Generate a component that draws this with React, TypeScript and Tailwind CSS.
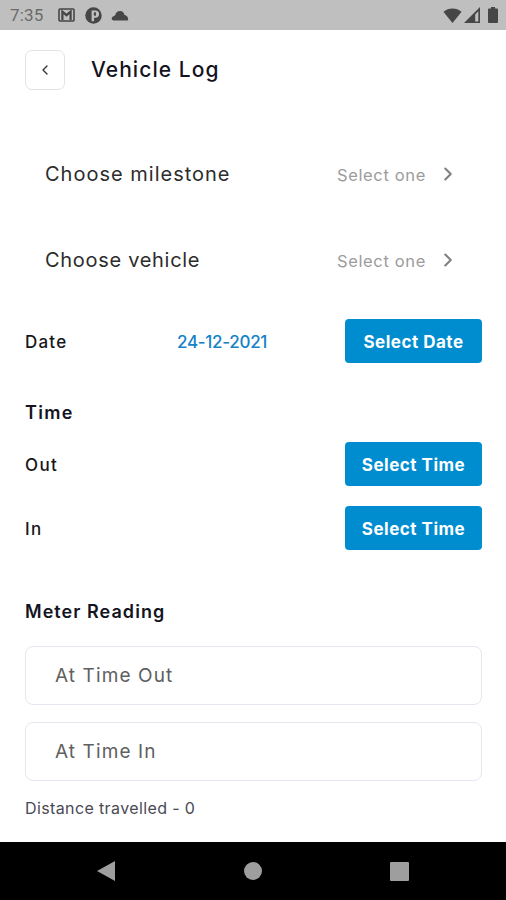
import { ChevronLeft, ChevronRight } from "lucide-react";


const StatusBar = () => {
    return (
        <div className="flex h-[30px] items-center justify-between bg-[#bfbfbf] text-[#464646]">
            <div className="flex items-center pl-[10px]">
                <span className="w-[48px] font-['Roboto',sans-serif] text-[17px] leading-none tracking-[0.2px] text-[#6b6b6b]">7:35</span>
                <svg width="17" height="14" viewBox="0 0 17 14" fill="none">
                    <rect x="1" y="1" width="15" height="12" rx="1" stroke="currentColor" strokeWidth="1.6" />
                    <path d="M4.4 12V3.6L8.5 7.2L12.6 3.6V12" stroke="currentColor" strokeWidth="2.2" />
                </svg>
                <svg className="ml-[10px]" width="17" height="17" viewBox="0 0 18 18">
                    <circle cx="9" cy="9" r="8.7" fill="currentColor" />
                    <path d="M7 15V3.6H11A3.6 3.6 0 0 1 11 11.4H9.6V15Z" fill="#bfbfbf" />
                    <path d="M9.4 5.6H11.6V9.2H9.4Z" fill="currentColor" />
                </svg>
                <svg className="ml-[9px]" width="18" height="11" viewBox="0 0 18 11" fill="currentColor">
                    <path d="M2.4 10.4Q0.6 10.4 0.6 8.6Q0.8 6.4 4 5.4Q5.2 1 9.2 1Q12.6 1.2 13.4 4.8Q17 6 17.2 9.4Q17.2 10.4 16.2 10.4Z" />
                </svg>
            </div>
            <div className="flex items-center pr-[8px]">
                <svg width="19" height="15" viewBox="0 0 19 15" fill="currentColor">
                    <path d="M9.5 15L0.4 3.8C5.4 -0.7 13.6 -0.7 18.6 3.8Z" />
                </svg>
                <svg className="ml-[2px]" width="16" height="16" viewBox="0 0 16 16">
                    <path d="M0 16L16 0V16Z" fill="currentColor" />
                    <path d="M11.2 7.4L14.3 4.2V14.4H11.2Z" fill="#bfbfbf" />
                </svg>
                <svg className="ml-[8px]" width="10" height="16" viewBox="0 0 10 16" fill="currentColor">
                    <path d="M3 0H7V1.6H9Q10 1.6 10 2.6V15Q10 16 9 16H1Q0 16 0 15V2.6Q0 1.6 1 1.6H3Z" />
                </svg>
            </div>
        </div>
    );
};

const ChooseRow = ({ label, tracking }: { label: string; tracking: string }) => {
    return (
        <div className="flex h-[86px] items-center justify-between pl-[20px] pr-[23px]">
            <span className={`text-[20px] text-[#2c2c2c] ${tracking}`}>{label}</span>
            <div className="flex items-center">
                <span className="pt-[2px] text-[16.5px] tracking-[0.65px] text-[#9c9c9c]">Select one</span>
                <ChevronRight className="ml-[11px] text-[#808080]" size={22} strokeWidth={2.3} />
            </div>
        </div>
    );
};

const PickButton = ({ label }: { label: string }) => {
    return (
        <button className="h-[44px] w-[137px] rounded-[4px] bg-[#008dd0] pt-[3px] text-[17px] font-bold tracking-[0.5px] text-white">
            {label}
        </button>
    );
};

const MeterInput = ({ label }: { label: string }) => {
    return (
        <div className="flex h-[59px] items-center rounded-[8px] border border-[#e6e6f0] pl-[29px] pt-[2px] text-[19px] tracking-[1.1px] text-[#606060]">
            {label}
        </div>
    );
};

const NavBar = () => {
    return (
        <div className="flex h-[58px] items-center justify-between bg-black pl-[97px] pr-[97px] text-[#9e9e9e]">
            <svg width="18" height="20" viewBox="0 0 18 20" fill="currentColor">
                <path d="M0 10L18 0V20Z" />
            </svg>
            <div className="size-[18px] rounded-full bg-current"></div>
            <div className="size-[19px] rounded-[1px] bg-current"></div>
        </div>
    );
};

const App = () => {
    return (
        <div className="flex h-[900px] w-[506px] flex-col bg-white font-['Inter','Open_Sans',sans-serif] text-[#16161a]">
            <StatusBar />
            <div className="flex-1 pl-[25px] pr-[24px] pt-[20px]">
                <div className="flex h-[40px] items-center">
                    <button className="flex size-[40px] items-center justify-center rounded-[7px] border border-[#e3e3e3]">
                        <ChevronLeft className="text-[#333333]" size={16} strokeWidth={2} />
                    </button>
                    <h1 className="ml-[26px] text-[21px] font-medium tracking-[1.05px] text-[#14141f]">Vehicle Log</h1>
                </div>

                <div className="mt-[41px]">
                    <ChooseRow label="Choose milestone" tracking="tracking-[1px]" />
                    <ChooseRow label="Choose vehicle" tracking="tracking-[0.7px]" />
                </div>

                <div className="mt-[16px] flex h-[44px] items-center">
                    <span className="w-[152px] pt-[3px] text-[17px] font-medium tracking-[1.2px]">Date</span>
                    <span className="flex-1 pt-[3px] text-[17px] font-medium tracking-[-0.3px] text-[#1683c6]">24-12-2021</span>
                    <PickButton label="Select Date" />
                </div>

                <h2 className="mt-[37px] h-[26px] text-[18px] font-semibold leading-[26px] tracking-[1.3px] text-[#14141f]">Time</h2>
                <div className="mt-[16px] flex h-[44px] items-center justify-between">
                    <span className="pt-[3px] text-[17px] font-medium tracking-[1.4px]">Out</span>
                    <PickButton label="Select Time" />
                </div>
                <div className="mt-[20px] flex h-[44px] items-center justify-between">
                    <span className="pt-[3px] text-[17px] font-medium tracking-[1.4px]">In</span>
                    <PickButton label="Select Time" />
                </div>

                <h2 className="mt-[49px] h-[26px] text-[18px] font-semibold leading-[26px] tracking-[1.05px] text-[#14141f]">Meter Reading</h2>
                <div className="mt-[21px] flex flex-col gap-[17px]">
                    <MeterInput label="At Time Out" />
                    <MeterInput label="At Time In" />
                </div>
                <p className="mt-[15px] text-[16px] leading-[24px] tracking-[0.38px] text-[#4a4a55]">Distance travelled - 0</p>
            </div>
            <NavBar />
        </div>
    );
};
export default App;
